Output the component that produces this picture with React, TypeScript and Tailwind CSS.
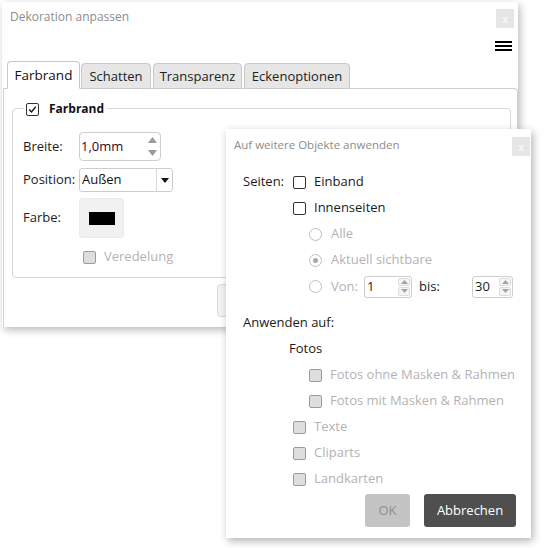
import React from "react";

const F = "font-['Open_Sans',sans-serif]";

function Check({ checked = false, disabled = false }: { checked?: boolean; disabled?: boolean }) {
  return (
    <span
      className={`inline-flex items-center justify-center w-[13px] h-[13px] rounded-[2px] border ${
        disabled ? "bg-[#dedede] border-[#9c9c9c]" : "bg-white border-[#333]"
      }`}
    >
      {checked && (
        <svg width="9" height="9" viewBox="0 0 9 9">
          <path d="M1.2 4.6 L3.5 7 L7.8 1.6" fill="none" stroke="#111" strokeWidth="1.4" />
        </svg>
      )}
    </span>
  );
}

function Radio({ on = false }: { on?: boolean }) {
  return (
    <span className="inline-flex items-center justify-center w-[13px] h-[13px] rounded-full border border-[#bdbdbd] bg-white">
      {on && <span className="w-[5px] h-[5px] rounded-full bg-[#a9a9a9]" />}
    </span>
  );
}

function SpinArrows({ color = "#9a9a9a" }: { color?: string }) {
  return (
    <div className="flex flex-col justify-between h-full py-[4px]">
      <svg width="9" height="6" viewBox="0 0 9 6">
        <path d="M0 6 L4.5 0 L9 6 Z" fill={color} />
      </svg>
      <svg width="9" height="6" viewBox="0 0 9 6">
        <path d="M0 0 L4.5 6 L9 0 Z" fill={color} />
      </svg>
    </div>
  );
}

function SpinBoxes() {
  return (
    <div className="flex flex-col gap-[1px] h-full py-[1px]">
      <div className="flex-1 w-[12px] rounded-[2px] border border-[#dcdcdc] bg-[#f5f5f5] flex items-center justify-center">
        <svg width="7" height="4" viewBox="0 0 7 4">
          <path d="M0 4 L3.5 0 L7 4 Z" fill="#a3a3a3" />
        </svg>
      </div>
      <div className="flex-1 w-[12px] rounded-[2px] border border-[#dcdcdc] bg-[#f5f5f5] flex items-center justify-center">
        <svg width="7" height="4" viewBox="0 0 7 4">
          <path d="M0 0 L3.5 4 L7 0 Z" fill="#a3a3a3" />
        </svg>
      </div>
    </div>
  );
}

function CloseBtn() {
  return (
    <div className="w-[18px] h-[19px] bg-[#e6e6e6] flex items-center justify-center text-white text-[10px] leading-none">
      x
    </div>
  );
}

const tabBase = "h-[26px] border border-[#c8c8c8] bg-[#e6e6e6] rounded-t-[4px] text-[13px] leading-[24px] text-[#222] text-center";

export default function App() {
  return (
    <div className={`relative w-[549px] h-[548px] bg-white overflow-hidden text-[#1b1b1b] ${F}`}>
      {/* Dialog 1 */}
      <div className="ml-[2px] mt-[2px] w-[516px] h-[325px] bg-white shadow-[2px_3px_8px_rgba(0,0,0,0.28)] flex flex-col">
        <div className="h-[30px] flex justify-between items-start">
          <div className="pl-[8px] text-[12px] leading-[30px] text-[#8c8c8c]">Dekoration anpassen</div>
          <div className="mt-[7px] mr-[4px]">
            <CloseBtn />
          </div>
        </div>
        <div className="h-[29px] flex justify-end items-center pr-[6px]">
          <div className="flex flex-col gap-[2px] w-[17px] mb-[2px]">
            <div className="h-[2px] bg-black" />
            <div className="h-[2px] bg-black" />
            <div className="h-[2px] bg-black" />
          </div>
        </div>
        <div className="flex items-end pl-[5px] h-[28px] relative z-10 -mb-px">
          <div className="w-[73px] h-[28px] border border-[#c8c8c8] border-b-white bg-white rounded-t-[4px] text-[13.5px] leading-[26px] text-[#111] text-center">
            Farbrand
          </div>
          <div className={`ml-[1px] w-[70px] ${tabBase}`}>Schatten</div>
          <div className={`ml-[2px] w-[89px] ${tabBase}`}>Transparenz</div>
          <div className={`ml-[2px] w-[106px] ${tabBase}`}>Eckenoptionen</div>
        </div>
        <div className="ml-[1px] flex-1 border border-[#d0d0d0] border-b-0 rounded-tr-[4px] pl-[8px] pr-[6px] pt-[19px] relative">
          <div className="relative border border-[#d6d6d6] rounded-[4px] h-[170px] pl-[10px] pt-[23px]">
            <div className="absolute -top-[7px] left-[11px] bg-white px-[2px] flex items-center gap-[10px] pr-[3px]">
              <Check checked />
              <span className="text-[12px] font-bold leading-[14px] text-[#111]">Farbrand</span>
            </div>
            <div className="flex items-center h-[29px]">
              <span className="w-[56px] text-[13px]">Breite:</span>
              <div className="w-[82px] h-[29px] border border-[#cdcdcd] rounded-[4px] flex items-center justify-between pl-[1px] pr-[3px]">
                <span className="text-[13px] text-[#2a0a2a]">1,0mm</span>
                <SpinArrows />
              </div>
            </div>
            <div className="flex items-center h-[24px] mt-[7px]">
              <span className="w-[56px] text-[13px]">Position:</span>
              <div className="w-[94px] h-[24px] border border-[#cdcdcd] rounded-[3px] flex items-center">
                <span className="flex-1 pl-[2px] text-[13px] text-[#111]">Außen</span>
                <div className="w-px h-full bg-[#d8d8d8]" />
                <div className="w-[15px] flex justify-center">
                  <svg width="8" height="5" viewBox="0 0 8 5">
                    <path d="M0 0 L4 5 L8 0 Z" fill="#111" />
                  </svg>
                </div>
              </div>
            </div>
            <div className="flex items-center h-[40px] mt-[6px]">
              <span className="w-[56px] text-[13px]">Farbe:</span>
              <div className="w-[45px] h-[40px] bg-[#f1f1f1] rounded-[3px] border border-[#ececec] flex items-center justify-center">
                <div className="w-[26px] h-[13px] bg-black" />
              </div>
            </div>
            <div className="flex items-center gap-[8px] mt-[12px] ml-[60px] h-[14px]">
              <Check disabled />
              <span className="text-[13px] text-[#b3b3b3]">Veredelung</span>
            </div>
          </div>
          <div className="absolute left-[213px] top-[195px] w-[80px] h-[33px] bg-[#f2f2f2] border border-[#dcdcdc] rounded-[4px]" />
        </div>
      </div>

      {/* Dialog 2 */}
      <div className="absolute left-[226px] top-[129px] w-[305px] h-[409px] bg-white shadow-[2px_3px_8px_rgba(0,0,0,0.3)] flex flex-col">
        <div className="h-[40px] flex justify-between items-start">
          <div className="pl-[8px] pt-[7px] text-[11.5px] leading-[18px] text-[#8c8c8c]">Auf weitere Objekte anwenden</div>
          <div className="mt-[8px] mr-[1px]">
            <CloseBtn />
          </div>
        </div>
        <div className="flex items-center h-[26px] text-[13px]">
          <span className="w-[67px] pl-[17px]">Seiten:</span>
          <Check />
          <span className="ml-[8px]">Einband</span>
        </div>
        <div className="flex items-center h-[26px] text-[13px] pl-[67px]">
          <Check />
          <span className="ml-[8px]">Innenseiten</span>
        </div>
        <div className="flex items-center h-[26px] text-[13px] pl-[83px] text-[#b3b3b3]">
          <Radio />
          <span className="ml-[9px]">Alle</span>
        </div>
        <div className="flex items-center h-[26px] text-[13px] pl-[83px] text-[#b3b3b3]">
          <Radio on />
          <span className="ml-[9px]">Aktuell sichtbare</span>
        </div>
        <div className="flex items-center h-[27px] text-[13px] pl-[83px]">
          <Radio />
          <span className="ml-[9px] w-[33px] text-[#b3b3b3]">Von:</span>
          <div className="w-[48px] h-[22px] border border-[#cdcdcd] rounded-[3px] flex items-center justify-between pl-[2px] pr-[1px]">
            <span>1</span>
            <SpinBoxes />
          </div>
          <span className="ml-[7px] w-[53px]">bis:</span>
          <div className="w-[41px] h-[22px] border border-[#cdcdcd] rounded-[3px] flex items-center justify-between pl-[2px] pr-[1px]">
            <span>30</span>
            <SpinBoxes />
          </div>
        </div>
        <div className="mt-[10px] flex items-center h-[26px] text-[13px] pl-[17px]">Anwenden auf:</div>
        <div className="flex items-center h-[26px] text-[13px] pl-[63px]">Fotos</div>
        <div className="flex items-center h-[26px] text-[13px] pl-[83px] text-[#b3b3b3]">
          <Check disabled />
          <span className="ml-[8px]">Fotos ohne Masken &amp; Rahmen</span>
        </div>
        <div className="flex items-center h-[26px] text-[13px] pl-[83px] text-[#b3b3b3]">
          <Check disabled />
          <span className="ml-[8px]">Fotos mit Masken &amp; Rahmen</span>
        </div>
        <div className="flex items-center h-[26px] text-[13px] pl-[67px] text-[#b3b3b3]">
          <Check disabled />
          <span className="ml-[8px]">Texte</span>
        </div>
        <div className="flex items-center h-[26px] text-[13px] pl-[67px] text-[#b3b3b3]">
          <Check disabled />
          <span className="ml-[8px]">Cliparts</span>
        </div>
        <div className="flex items-center h-[26px] text-[13px] pl-[67px] text-[#b3b3b3]">
          <Check disabled />
          <span className="ml-[8px]">Landkarten</span>
        </div>
        <div className="mt-[2px] flex pl-[139px] gap-[14px]">
          <div className="w-[45px] h-[33px] rounded-[3px] bg-[#c4c4c4] text-[#8e8e8e] text-[13px] flex items-center justify-center">OK</div>
          <div className="w-[92px] h-[33px] rounded-[3px] bg-[#4f4f4f] text-white text-[13px] flex items-center justify-center">Abbrechen</div>
        </div>
      </div>
    </div>
  );
}
